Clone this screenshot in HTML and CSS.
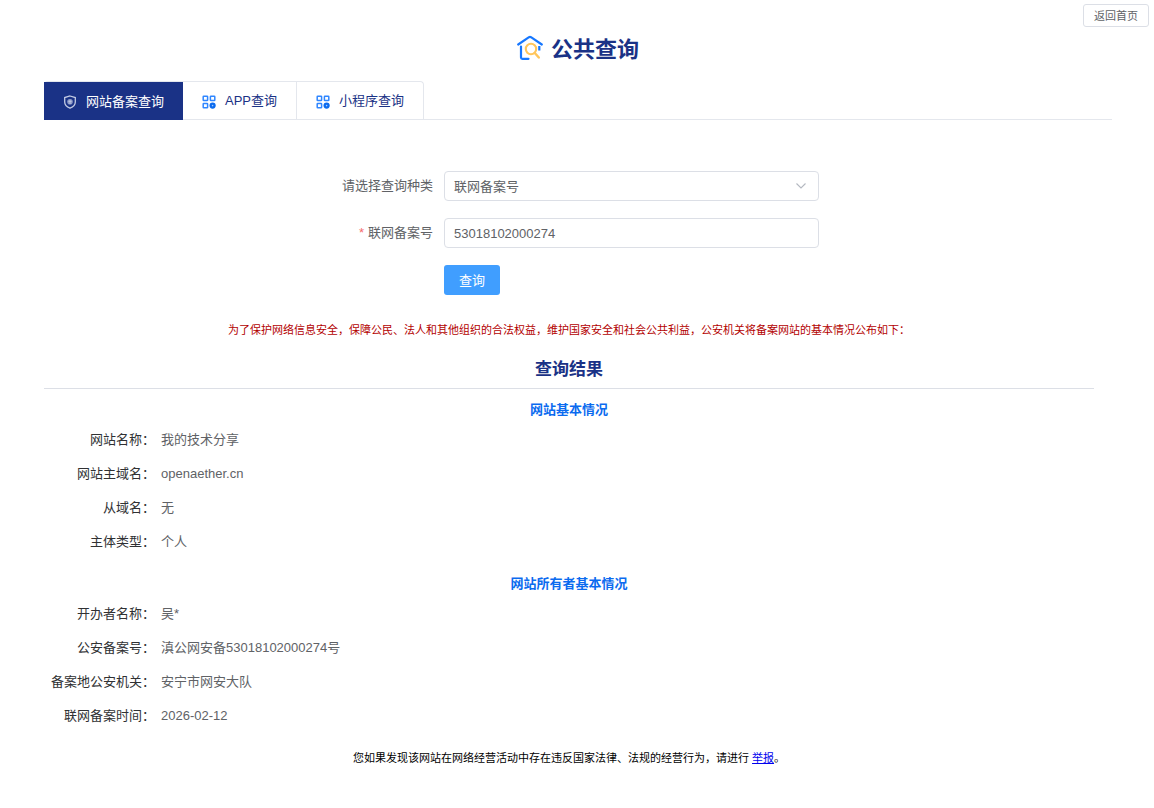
FILE: index.html
```html
<!DOCTYPE html>
<html lang="zh-CN">
<head>
    <meta charset="UTF-8">
    <meta name="viewport" content="width=device-width, initial-scale=1.0">
    <title>公共查询</title>
    <link rel="stylesheet" href="styles.css">
</head>
<body>
    <header class="top-bar">
        <button type="button" class="back-btn">返回首页</button>
    </header>

    <main class="page">
        <h1 class="page-title">
            <svg class="title-icon" viewBox="0 0 26 26" width="26" height="26" fill="none" aria-hidden="true">
                <path d="M1.2 9.5 L12 2.2 Q13 1.6 14 2.2 L24.8 9.5" stroke="#1677ff" stroke-width="2.2" stroke-linecap="round"/>
                <path d="M4 11.5 V22.5 Q4 23.8 5.3 23.8 H11.5" stroke="#1677ff" stroke-width="2.2" stroke-linecap="round"/>
                <path d="M22.3 11 V15.5" stroke="#1677ff" stroke-width="2.2"/>
                <circle cx="14" cy="14" r="5.2" stroke="#ffc65c" stroke-width="2.1"/>
                <path d="M17.8 18 L21.8 22.5" stroke="#ffc65c" stroke-width="2.4" stroke-linecap="round"/>
            </svg>
            公共查询
        </h1>

        <nav class="tabs">
            <div class="tab-list" role="tablist">
                <button type="button" class="tab active" role="tab" aria-selected="true">
                    <svg viewBox="0 0 14 14" width="14" height="14" fill="none" aria-hidden="true">
                        <path d="M7 1 L12.3 2.6 V7 Q12.3 11.2 7 13.2 Q1.7 11.2 1.7 7 V2.6 Z" stroke="#c3cbe4" stroke-width="1.3"/>
                        <circle cx="7" cy="6.7" r="2.8" fill="#8e9bc9"/>
                        <path d="M7 5 V9 M5.5 6.5 H8.5" stroke="#b9c2df" stroke-width="1"/>
                    </svg>
                    网站备案查询
                </button>
                <button type="button" class="tab" role="tab" aria-selected="false">
                    <svg viewBox="0 0 14 14" width="14" height="14" fill="none" aria-hidden="true">
                        <rect x="1.2" y="1.2" width="4.4" height="4.4" rx="0.6" stroke="#2f86ff" stroke-width="1.5"/>
                        <rect x="8.4" y="1.2" width="4.4" height="4.4" rx="0.6" stroke="#2f86ff" stroke-width="1.5"/>
                        <rect x="1.2" y="8.4" width="4.4" height="4.4" rx="0.6" stroke="#2f86ff" stroke-width="1.5"/>
                        <circle cx="10.6" cy="10.6" r="3.1" fill="#0b6bef"/>
                        <circle cx="10.6" cy="10.6" r="0.8" fill="#a9cdff"/>
                    </svg>
                    APP查询
                </button>
                <button type="button" class="tab" role="tab" aria-selected="false">
                    <svg viewBox="0 0 14 14" width="14" height="14" fill="none" aria-hidden="true">
                        <rect x="1.2" y="1.2" width="4.4" height="4.4" rx="0.6" stroke="#2f86ff" stroke-width="1.5"/>
                        <rect x="8.4" y="1.2" width="4.4" height="4.4" rx="0.6" stroke="#2f86ff" stroke-width="1.5"/>
                        <rect x="1.2" y="8.4" width="4.4" height="4.4" rx="0.6" stroke="#2f86ff" stroke-width="1.5"/>
                        <circle cx="10.6" cy="10.6" r="3.1" fill="#0b6bef"/>
                        <circle cx="10.6" cy="10.6" r="0.8" fill="#a9cdff"/>
                    </svg>
                    小程序查询
                </button>
            </div>
        </nav>

        <div class="content">
            <form class="query-form">
                <label for="query-type">请选择查询种类</label>
                <div class="select-box">
                    <select id="query-type">
                        <option>联网备案号</option>
                    </select>
                    <svg class="arrow" viewBox="0 0 12 12" width="12" height="12" fill="none" aria-hidden="true">
                        <path d="M1.5 3.5 L6 8 L10.5 3.5" stroke="#b4b8c0" stroke-width="1.1"/>
                    </svg>
                </div>

                <label for="record-no"><span class="required">*</span>联网备案号</label>
                <input id="record-no" type="text" value="53018102000274">

                <button type="button" class="submit-btn">查询</button>
            </form>

            <p class="notice">为了保护网络信息安全，保障公民、法人和其他组织的合法权益，维护国家安全和社会公共利益，公安机关将备案网站的基本情况公布如下：</p>

            <h2 class="result-title">查询结果</h2>

            <section class="info">
                <h3>网站基本情况</h3>
                <dl>
                    <dt>网站名称：</dt>
                    <dd>我的技术分享</dd>
                    <dt>网站主域名：</dt>
                    <dd>openaether.cn</dd>
                    <dt>从域名：</dt>
                    <dd>无</dd>
                    <dt>主体类型：</dt>
                    <dd>个人</dd>
                </dl>
            </section>

            <section class="info">
                <h3>网站所有者基本情况</h3>
                <dl>
                    <dt>开办者名称：</dt>
                    <dd>吴*</dd>
                    <dt>公安备案号：</dt>
                    <dd>滇公网安备53018102000274号</dd>
                    <dt>备案地公安机关：</dt>
                    <dd>安宁市网安大队</dd>
                    <dt>联网备案时间：</dt>
                    <dd>2026-02-12</dd>
                </dl>
            </section>

            <p class="report">您如果发现该网站在网络经营活动中存在违反国家法律、法规的经营行为，请进行 <a href="#">举报</a>。</p>
        </div>
    </main>
</body>
</html>
```

FILE: styles.css
```css
* {
    box-sizing: border-box;
}

body {
    margin: 0;
    background: #fff;
    color: #606266;
    font-family: "Liberation Sans", "Noto Sans CJK SC", sans-serif;
    font-size: 13px;
}

button, input, select {
    font-family: inherit;
    font-size: 13px;
}

.top-bar {
    display: flex;
    justify-content: flex-end;
    padding: 4px 5px 0;
}

.back-btn {
    height: 23px;
    padding: 0 10px 2px;
    border: 1px solid #dcdfe6;
    border-radius: 3px;
    background: #fff;
    color: #606266;
    font-size: 11px;
}

.page {
    padding: 0 42px 0 44px;
}

.page-title {
    display: flex;
    align-items: center;
    justify-content: center;
    gap: 8px;
    height: 40px;
    margin: 0 0 14px;
    color: #1a3286;
    font-size: 22px;
}

.title-icon {
    margin-top: 2px;
}

.tabs {
    display: flex;
    border-bottom: 1px solid #e4e7ed;
}

.tab-list {
    display: flex;
    border: 1px solid #e4e7ed;
    border-bottom: none;
    border-left: none;
    border-radius: 4px 4px 0 0;
}

.tab {
    display: flex;
    align-items: center;
    gap: 9px;
    height: 37px;
    padding: 0 19px 2px;
    border: none;
    border-right: 1px solid #e4e7ed;
    background: none;
    color: #1a3286;
}

.tab:last-child {
    border-right: none;
}

.tab.active {
    height: 38px;
    margin-bottom: -1px;
    border-right: none;
    background: #1a3286;
    color: #fff;
}

.tab svg {
    margin-top: 4px;
}

.content {
    padding-right: 18px;
}

.query-form {
    display: grid;
    grid-template-columns: 16fr 375px 11fr;
    align-items: center;
    row-gap: 17px;
    padding-top: 51px;
}

.query-form label {
    padding: 0 11px 3px 0;
    text-align: right;
}

.required {
    margin-right: 4px;
    color: #f56c6c;
}

.query-form input,
.submit-btn {
    grid-column: 2;
}

.select-box {
    position: relative;
}

.select-box select,
.query-form input {
    display: block;
    width: 100%;
    height: 30px;
    padding: 0 9px;
    border: 1px solid #dcdfe6;
    border-radius: 4px;
    background: #fff;
    color: #606266;
    appearance: none;
}

.query-form label:first-of-type,
.query-form label {
    grid-column: 1;
}

.arrow {
    position: absolute;
    top: 9px;
    right: 12px;
    pointer-events: none;
}

.submit-btn {
    justify-self: start;
    height: 30px;
    padding: 0 15px 2px;
    border: none;
    border-radius: 3px;
    background: #409eff;
    color: #fff;
}

.notice {
    margin: 26px 0 0;
    color: #b30000;
    font-size: 11px;
    line-height: 18px;
    text-align: center;
}

.result-title {
    margin: 19px 0 0;
    padding-bottom: 6px;
    border-bottom: 1px solid #dcdfe6;
    color: #1a3286;
    font-size: 17px;
    line-height: 24px;
    text-align: center;
}

.info h3 {
    margin: 12px 0 4px;
    color: #0b6bef;
    font-size: 13px;
    line-height: 18px;
    text-align: center;
}

.info dl {
    display: grid;
    grid-template-columns: 111px 1fr;
    column-gap: 6px;
    margin: 0 0 16px;
    line-height: 34px;
}

.info dt {
    color: #303133;
    text-align: right;
}

.info dd {
    margin: 0;
}

.report {
    margin: 0;
    color: #000;
    font-size: 11px;
    line-height: 18px;
    text-align: center;
}

.report a {
    color: #0000ee;
}
```
